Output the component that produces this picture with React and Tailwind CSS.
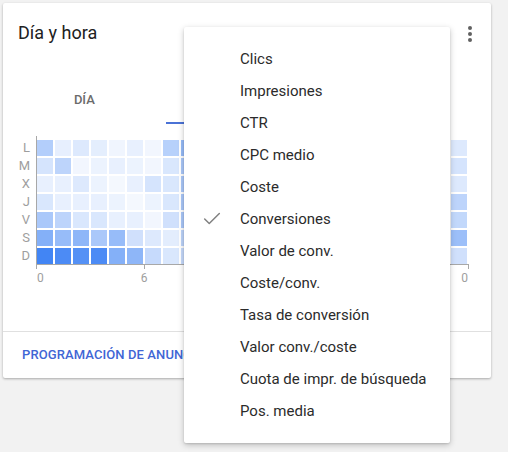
import { Check } from 'lucide-react'

const DAYS = ['L', 'M', 'X', 'J', 'V', 'S', 'D']

// intensity per day (rows) and hour (columns), 0..1
const HEAT = [
  [0.4, 0.13, 0.18, 0.14, 0.08, 0.12, 0.07, 0.38, 0.55, 0.45, 0.35, 0.3, 0.28, 0.3, 0.25, 0.3, 0.35, 0.28, 0.22, 0.2, 0.18, 0.2, 0.15, 0.18],
  [0.22, 0.35, 0.07, 0.1, 0.12, 0.1, 0.07, 0.2, 0.45, 0.4, 0.3, 0.3, 0.25, 0.2, 0.25, 0.3, 0.28, 0.25, 0.2, 0.18, 0.2, 0.15, 0.2, 0.22],
  [0.12, 0.12, 0.18, 0.1, 0.06, 0.12, 0.22, 0.2, 0.45, 0.35, 0.3, 0.25, 0.3, 0.28, 0.2, 0.25, 0.3, 0.2, 0.22, 0.18, 0.15, 0.2, 0.18, 0.18],
  [0.2, 0.12, 0.12, 0.12, 0.1, 0.06, 0.1, 0.2, 0.45, 0.35, 0.3, 0.28, 0.25, 0.3, 0.22, 0.25, 0.28, 0.3, 0.25, 0.2, 0.22, 0.25, 0.3, 0.35],
  [0.45, 0.35, 0.2, 0.2, 0.12, 0.12, 0.07, 0.25, 0.45, 0.4, 0.35, 0.3, 0.3, 0.28, 0.3, 0.25, 0.3, 0.35, 0.3, 0.28, 0.3, 0.3, 0.35, 0.32],
  [0.65, 0.55, 0.6, 0.45, 0.55, 0.25, 0.18, 0.15, 0.35, 0.3, 0.35, 0.4, 0.35, 0.3, 0.35, 0.4, 0.45, 0.4, 0.35, 0.4, 0.45, 0.5, 0.45, 0.52],
  [1, 0.95, 0.9, 0.95, 0.65, 0.6, 0.3, 0.2, 0.3, 0.3, 0.35, 0.4, 0.3, 0.35, 0.4, 0.35, 0.3, 0.3, 0.35, 0.3, 0.28, 0.25, 0.3, 0.25],
]

const METRICS = [
  'Clics',
  'Impresiones',
  'CTR',
  'CPC medio',
  'Coste',
  'Conversiones',
  'Valor de conv.',
  'Coste/conv.',
  'Tasa de conversión',
  'Valor conv./coste',
  'Cuota de impr. de búsqueda',
  'Pos. media',
]

const TICKS = [0, 108, 216, 324, 432]

function Heatmap() {
  return (
    <div className="flex mt-[12px]">
      <div className="w-[33px] pr-[6px] pt-[4px] flex flex-col items-end gap-[2px] text-[13px] text-[#9e9e9e]">
        {DAYS.map((d) => (
          <div key={d} className="h-[16px] leading-[16px]">
            {d}
          </div>
        ))}
      </div>
      <div className="w-[433px]">
        <div className="border-l border-b border-[#a8a8a8] pt-[4px] pr-[2px]">
          <div className="grid grid-cols-[repeat(24,16px)] auto-rows-[16px] gap-[2px]">
            {HEAT.flatMap((row, r) =>
              row.map((v, c) => (
                <div
                  key={`${r}-${c}`}
                  style={{ backgroundColor: `rgba(66,133,244,${v})` }}
                />
              ))
            )}
          </div>
        </div>
        <div className="relative h-[20px] text-[12px] leading-[14px] text-[#9e9e9e]">
          {TICKS.map((t) => (
            <div key={t} className="absolute top-0 w-px h-[4px] bg-[#a8a8a8]" style={{ left: t }} />
          ))}
          <span className="absolute top-[6px] left-[1px]">0</span>
          <span className="absolute top-[6px] left-[108px] -translate-x-1/2">6</span>
          <span className="absolute top-[6px] right-[1px]">0</span>
        </div>
      </div>
    </div>
  )
}

function MetricMenu() {
  return (
    <div className="absolute left-[181px] top-[24px] z-10 w-[266px] py-4 bg-white rounded-[2px] shadow-[0_2px_6px_rgba(0,0,0,0.22),0_1px_2px_rgba(0,0,0,0.12)]">
      {METRICS.map((m) => (
        <div key={m} className="h-[32px] flex items-center pl-[16px] text-[15px] text-[#2b2b2b]">
          <span className="w-[24px] h-[24px] flex items-center justify-center">
            {m === 'Conversiones' && <Check size={22} strokeWidth={1.6} className="text-[#808080]" />}
          </span>
          <span className="ml-[16px]">{m}</span>
        </div>
      ))}
    </div>
  )
}

export default function App() {
  return (
    <div className="min-h-screen bg-[#f2f2f2] pt-[3px] pl-[3px] font-['Roboto',sans-serif]">
      <div className="relative w-[488px] h-[375px] bg-white rounded-[2px] shadow-[0_1px_3px_rgba(0,0,0,0.2),0_1px_2px_rgba(0,0,0,0.12)] flex flex-col">
        <div className="flex items-start justify-between pl-[15px] pr-[9px] pt-[18px]">
          <h2 className="text-[18px] leading-[24px] text-[#212121]">Día y hora</h2>
          <svg width="24" height="24" viewBox="0 0 24 24" className="mt-[1px]">
            <circle cx="12" cy="6" r="2" fill="#616161" />
            <circle cx="12" cy="12" r="2" fill="#616161" />
            <circle cx="12" cy="18" r="2" fill="#616161" />
          </svg>
        </div>

        {/* tabs; the 2nd and 3rd sit under the open menu */}
        <div className="flex mt-[30px] h-[48px]">
          <div className="flex-1 flex items-center justify-center text-[13px] font-medium uppercase text-[#6b6b6b]">
            Día
          </div>
          <div className="flex-1 border-b-2 border-[#4a72d6]" />
          <div className="flex-1" />
        </div>

        <Heatmap />

        <div className="mt-auto h-[47px] border-t border-[#e0e0e0] flex items-center pl-[19px]">
          <span className="text-[13px] font-medium uppercase text-[#4166d5] tracking-[0.1px]">
            Programación de anuncios
          </span>
        </div>

        <MetricMenu />
      </div>
    </div>
  )
}
